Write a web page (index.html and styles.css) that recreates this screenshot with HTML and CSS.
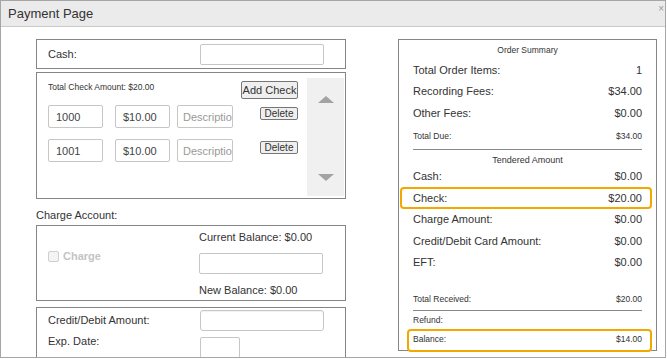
FILE: index.html
```html
<!DOCTYPE html>
<html lang="en">
  <head>
    <meta charset="UTF-8" />
    <title>Payment Page</title>
    <link rel="stylesheet" href="styles.css">
  </head>
  <body>
    <div class="dialog">
      <div class="dialog-title">
        <span>Payment Page</span>
        <span class="close">×</span>
      </div>

      <div class="dialog-body">
        <div class="left-col">
          <div class="box cash-box">
            <label class="field-label">Cash:</label>
            <input type="text" class="field-input" />
          </div>

          <div class="box check-box">
            <div class="check-main">
              <div class="check-header">
                <span class="small-text">Total Check Amount: $20.00</span>
                <button class="btn add-btn">Add Check</button>
              </div>
              <div class="check-row">
                <input type="text" class="field-input num" value="1000" />
                <input type="text" class="field-input amt" value="$10.00" />
                <input type="text" class="field-input desc" placeholder="Description" />
                <button class="btn del-btn">Delete</button>
              </div>
              <div class="check-row">
                <input type="text" class="field-input num" value="1001" />
                <input type="text" class="field-input amt" value="$10.00" />
                <input type="text" class="field-input desc" placeholder="Description" />
                <button class="btn del-btn">Delete</button>
              </div>
            </div>
            <div class="scroller">
              <span class="arrow up"></span>
              <span class="arrow down"></span>
            </div>
          </div>

          <div class="section-label">Charge Account:</div>

          <div class="box charge-box">
            <div class="charge-left">
              <span class="fake-check"></span>
              <span class="charge-text">Charge</span>
            </div>
            <div class="charge-right">
              <div class="balance-line">Current Balance: $0.00</div>
              <input type="text" class="field-input" />
              <div class="balance-line new">New Balance: $0.00</div>
            </div>
          </div>

          <div class="box credit-box">
            <div class="credit-row">
              <label class="field-label">Credit/Debit Amount:</label>
              <input type="text" class="field-input big" />
            </div>
            <div class="credit-row exp">
              <label class="field-label">Exp. Date:</label>
              <input type="text" class="field-input short" />
            </div>
          </div>
        </div>

        <div class="box summary">
          <div class="sum-title">Order Summary</div>
          <div class="sum-row"><span>Total Order Items:</span><span>1</span></div>
          <div class="sum-row"><span>Recording Fees:</span><span>$34.00</span></div>
          <div class="sum-row"><span>Other Fees:</span><span>$0.00</span></div>
          <div class="sum-row small due"><span>Total Due:</span><span>$34.00</span></div>
          <div class="sum-title tendered">Tendered Amount</div>
          <div class="sum-row"><span>Cash:</span><span>$0.00</span></div>
          <div class="sum-row highlight check-hl"><span>Check:</span><span>$20.00</span></div>
          <div class="sum-row"><span>Charge Amount:</span><span>$0.00</span></div>
          <div class="sum-row"><span>Credit/Debit Card Amount:</span><span>$0.00</span></div>
          <div class="sum-row"><span>EFT:</span><span>$0.00</span></div>
          <div class="sum-row small received"><span>Total Received:</span><span>$20.00</span></div>
          <div class="sum-row small refund"><span>Refund:</span><span></span></div>
          <div class="sum-row small highlight balance-hl"><span>Balance:</span><span>$14.00</span></div>
        </div>
      </div>
    </div>
  </body>
</html>
```

FILE: styles.css
```css
* {
  margin: 0;
  padding: 0;
  box-sizing: border-box;
}

body {
  font-family: "Liberation Sans", Arial, sans-serif;
  background: #fff;
  color: #333;
}

.dialog {
  width: 666px;
  height: 358px;
  border: 1px solid #a6a6a6;
  background: white;
  overflow: hidden;
  display: flex;
  flex-direction: column;
}

.dialog-title {
  height: 26px;
  flex-shrink: 0;
  background: #ebebeb;
  border-bottom: 1px solid #c9c9c9;
  display: flex;
  justify-content: space-between;
  align-items: center;
  padding: 0 0 1px 7px;
  font-size: 13px;
  color: #333;
}

.close {
  font-size: 10px;
  color: #999;
  align-self: flex-start;
  margin-top: 2px;
  margin-right: 1px;
}

.dialog-body {
  display: flex;
  align-items: flex-start;
  padding: 12px 0 0 35px;
  gap: 52px;
  overflow: hidden;
  flex: 1;
}

.box {
  border: 1px solid #858585;
}

.left-col {
  width: 310px;
  display: flex;
  flex-direction: column;
  flex-shrink: 0;
}

.field-label {
  font-size: 11px;
  color: #333;
}

.field-input {
  height: 21px;
  border: 1px solid #c6c6c6;
  border-radius: 2px;
  background: white;
  font-family: inherit;
  font-size: 11px;
  color: #444;
  padding: 0 7px;
  outline: none;
}

.field-input::placeholder {
  color: #999;
}

/* cash */
.cash-box {
  height: 30px;
  display: flex;
  align-items: center;
  padding-left: 11px;
}

.cash-box .field-label {
  width: 152px;
}

.cash-box .field-input {
  width: 124px;
}

/* checks */
.check-box {
  height: 127px;
  margin-top: 3px;
  display: flex;
}

.check-main {
  flex: 1;
  padding: 8px 9px 0 11px;
}

.check-header {
  display: flex;
  justify-content: space-between;
  align-items: flex-start;
  height: 18px;
}

.small-text {
  font-size: 8.5px;
  color: #333;
  line-height: 12px;
}

.btn {
  font-family: inherit;
  background: #efefef;
  border: 1px solid #767676;
  border-radius: 2px;
  color: #333;
  cursor: pointer;
}

.add-btn {
  height: 18px;
  width: 57px;
  font-size: 11px;
}

.check-row {
  display: flex;
  align-items: flex-start;
  margin-top: 6px;
}

.check-row + .check-row {
  margin-top: 11px;
}

.check-row .field-input {
  height: 23px;
}

.num {
  width: 55px;
}

.amt {
  width: 55px;
  margin-left: 12px;
}

.check-row .desc {
  width: 56px;
  margin-left: 7px;
  padding: 0 0 0 5px;
}

.del-btn {
  margin-left: auto;
  margin-top: 2px;
  width: 38px;
  height: 13px;
  font-size: 10px;
  line-height: 10px;
}

.scroller {
  width: 37px;
  margin: 5px 1px 2px 0;
  background: #f0f0f0;
  display: flex;
  flex-direction: column;
  align-items: center;
  justify-content: space-between;
  padding: 18px 0 15px;
}

.arrow {
  width: 0;
  height: 0;
  border-left: 8px solid transparent;
  border-right: 8px solid transparent;
}

.arrow.up {
  border-bottom: 7px solid #a3a3a3;
}

.arrow.down {
  border-top: 7px solid #a3a3a3;
}

/* charge */
.section-label {
  height: 26px;
  padding-top: 9px;
  font-size: 11px;
  line-height: 14px;
  color: #333;
}

.charge-box {
  height: 76px;
  display: flex;
}

.charge-left {
  width: 162px;
  padding: 24px 0 0 11px;
  display: flex;
  align-items: flex-start;
  gap: 4px;
}

.fake-check {
  width: 11px;
  height: 11px;
  border: 1px solid #cfcfcf;
  border-radius: 2px;
  background: #f4f4f4;
  margin-top: 1px;
}

.charge-text {
  font-size: 11px;
  line-height: 13px;
  font-weight: bold;
  color: #c4c4c4;
}

.charge-right {
  display: flex;
  flex-direction: column;
}

.balance-line {
  height: 22px;
  line-height: 22px;
  font-size: 11px;
  color: #333;
}

.charge-right .field-input {
  width: 124px;
  margin-top: 5px;
}

.balance-line.new {
  margin-top: 7px;
  height: 18px;
  line-height: 18px;
}

/* credit */
.credit-box {
  margin-top: 6px;
  height: 70px;
  padding-left: 11px;
}

.credit-row {
  display: flex;
  align-items: center;
  height: 22px;
  margin-top: 1px;
}

.credit-row.exp {
  margin-top: 6px;
  align-items: flex-start;
}

.credit-row .field-label {
  width: 152px;
}

.credit-row.exp .field-label {
  line-height: 9px;
}

.big {
  width: 124px;
  border-radius: 3px;
  box-shadow: inset 0 1px 1px rgba(0, 0, 0, 0.06);
}

.short {
  width: 40px;
  height: 30px;
}

/* summary */
.summary {
  width: 259px;
  padding: 0 14px 0 14px;
  display: flex;
  flex-direction: column;
  flex-shrink: 0;
}

.sum-title {
  height: 19px;
  line-height: 20px;
  text-align: center;
  font-size: 8.5px;
  color: #333;
}

.sum-title.tendered {
  height: 16px;
  line-height: 20px;
  font-size: 9px;
}

.sum-row {
  display: flex;
  justify-content: space-between;
  align-items: center;
  height: 21.5px;
  font-size: 11px;
  color: #333;
  position: relative;
}

.sum-row.small {
  font-size: 8.5px;
}

.sum-row.due {
  height: 26px;
  border-bottom: 1px solid #888;
}

.sum-row.received {
  margin-top: 15.5px;
  height: 22px;
  border-bottom: 1px solid #888;
}

.sum-row.refund {
  height: 18px;
}

.sum-row.balance-hl {
  height: 21px;
}

.highlight::after {
  content: "";
  position: absolute;
  border: 2px solid #f3a800;
  border-radius: 4px;
  pointer-events: none;
}

.check-hl::after {
  left: -13px;
  right: -10px;
  top: 0;
  bottom: 0;
}

.balance-hl::after {
  left: -6px;
  right: -10px;
  top: 0;
  bottom: -2px;
}
```
